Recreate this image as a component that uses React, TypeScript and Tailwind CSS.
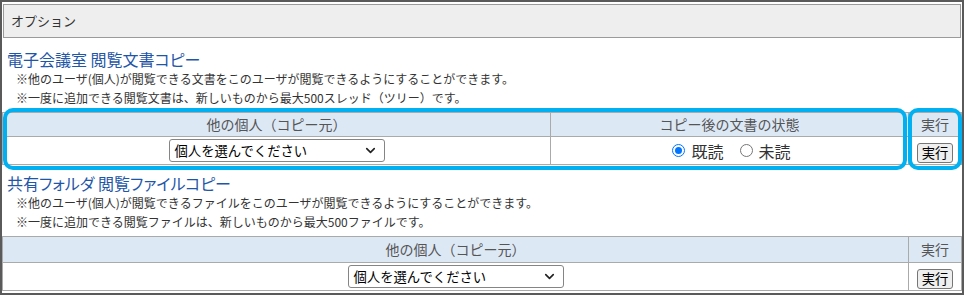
import { ChevronDown } from "lucide-react";

const jp = "font-['Meiryo','Noto_Sans_CJK_JP',sans-serif]";

function Select() {
  return (
    <div className="mx-auto flex h-[23px] w-[216px] items-center justify-between rounded-[3px] border border-[#858585] bg-white pl-[5px] pr-[6px] text-[13.33px] text-black">
      <span>個人を選んでください</span>
      <ChevronDown size={15} strokeWidth={2.6} className="text-[#222]" />
    </div>
  );
}

function RunButton() {
  return (
    <button
      type="button"
      className="h-[20px] rounded-[3px] border border-[#767676] bg-[#efefef] px-[4px] text-[13.33px] leading-[18px] text-black"
    >
      実行
    </button>
  );
}

function Radio({ checked, label }: { checked?: boolean; label: string }) {
  return (
    <label className="flex items-center gap-[6px] text-[16px] text-[#333]">
      {checked ? (
        <span className="flex h-[13px] w-[13px] items-center justify-center rounded-full border-[1.5px] border-[#0075ff]">
          <span className="h-[7px] w-[7px] rounded-full bg-[#0075ff]" />
        </span>
      ) : (
        <span className="h-[13px] w-[13px] rounded-full border border-[#767676] bg-white" />
      )}
      {label}
    </label>
  );
}

function Section({ title, notes }: { title: string; notes: string[] }) {
  return (
    <>
      <div className="pl-[5px] text-[16px] leading-[20px] text-[#1f56a8] [font-feature-settings:'palt']">
        {title}
      </div>
      <div className="pl-[14px] text-[12px] leading-[19px] text-[#333]">
        {notes.map((n) => (
          <div key={n}>{n}</div>
        ))}
      </div>
    </>
  );
}

const th = "border border-[#aaa] bg-[#dde8f5] p-0 text-center text-[14px] font-normal text-[#555]";
const td = "border border-[#aaa] p-0 text-center";

export default function App() {
  return (
    <div className={`box-border h-[295px] w-[964px] overflow-hidden border-2 border-[#5a5a5a] bg-white ${jp}`}>
      <div className="mx-px mt-[2px] flex h-[34px] items-center border border-[#9a9a9a] bg-[#eeeeee] pl-[7px] text-[13px] text-[#333]">
        オプション
      </div>

      <div className="mt-[11px]">
        <Section
          title="電子会議室 閲覧文書コピー"
          notes={[
            "※他のユーザ(個人)が閲覧できる文書をこのユーザが閲覧できるようにすることができます。",
            "※一度に追加できる閲覧文書は、新しいものから最大500スレッド（ツリー）です。",
          ]}
        />
      </div>

      <div className="relative mt-[5px]">
        <table className="w-full border-collapse">
          <thead>
            <tr className="h-[24px]">
              <th className={`${th} w-[548px]`}>他の個人（コピー元）</th>
              <th className={th}>コピー後の文書の状態</th>
              <th className={`${th} w-[53px]`}>実行</th>
            </tr>
          </thead>
          <tbody>
            <tr className="h-[28px]">
              <td className={td}>
                <Select />
              </td>
              <td className={td}>
                <div className="flex items-center justify-center gap-[16px] pl-[4px]">
                  <Radio checked label="既読" />
                  <Radio label="未読" />
                </div>
              </td>
              <td className={td}>
                <RunButton />
              </td>
            </tr>
          </tbody>
        </table>
        <div className="pointer-events-none absolute -top-[4px] left-[1px] h-[62px] w-[904px] rounded-[10px] border-4 border-[#00b0f0]" />
        <div className="pointer-events-none absolute -top-[4px] left-[906px] h-[62px] w-[54px] rounded-[10px] border-4 border-[#00b0f0]" />
      </div>

      <div className="mt-[8px]">
        <Section
          title="共有フォルダ 閲覧ファイルコピー"
          notes={[
            "※他のユーザ(個人)が閲覧できるファイルをこのユーザが閲覧できるようにすることができます。",
            "※一度に追加できる閲覧ファイルは、新しいものから最大500ファイルです。",
          ]}
        />
      </div>

      <table className="mt-[5px] w-full border-collapse">
        <thead>
          <tr className="h-[26px]">
            <th className={th}>他の個人（コピー元）</th>
            <th className={`${th} w-[53px]`}>実行</th>
          </tr>
        </thead>
        <tbody>
          <tr className="h-[28px]">
            <td className={td}>
              <Select />
            </td>
            <td className={td}>
              <RunButton />
            </td>
          </tr>
        </tbody>
      </table>
    </div>
  );
}
